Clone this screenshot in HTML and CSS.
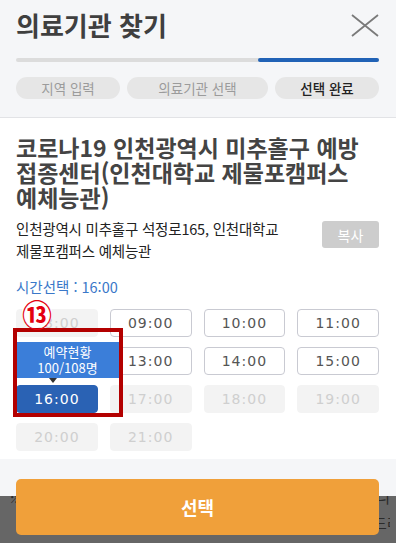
FILE: index.html
```html
<!DOCTYPE html>
<html lang="ko">
<head>
    <meta charset="UTF-8">
    <meta name="viewport" content="width=device-width, initial-scale=1.0">
    <title>의료기관 찾기</title>
    <link rel="stylesheet" href="styles.css">
</head>
<body>
    <div class="screen">
        <div class="modal">
            <div class="modal-head">
                <div class="head-row">
                    <h1 class="head-title">의료기관 찾기</h1>
                    <svg class="close" width="28" height="23" viewBox="0 0 28 23">
                        <path d="M1 1 L27 22 M27 1 L1 22" stroke="#7a7a7a" stroke-width="1.8" fill="none"/>
                    </svg>
                </div>
                <div class="progress"><div class="progress-fill"></div></div>
                <div class="steps">
                    <span class="step">지역 입력</span>
                    <span class="step">의료기관 선택</span>
                    <span class="step active">선택 완료</span>
                </div>
            </div>

            <div class="modal-body">
                <h2 class="place-name">코로나19 인천광역시 미추홀구 예방 접종센터(인천대학교 제물포캠퍼스 예체능관)</h2>
                <div class="address-row">
                    <p class="address">인천광역시 미추홀구 석정로165, 인천대학교 제물포캠퍼스 예체능관</p>
                    <button class="copy-btn">복사</button>
                </div>
                <div class="time-label">시간선택 : 16:00</div>
                <div class="time-grid">
                    <div class="time off">08:00</div>
                    <div class="time">09:00</div>
                    <div class="time">10:00</div>
                    <div class="time">11:00</div>
                    <div class="time covered">12:00</div>
                    <div class="time">13:00</div>
                    <div class="time">14:00</div>
                    <div class="time">15:00</div>
                    <div class="time selected">16:00</div>
                    <div class="time off">17:00</div>
                    <div class="time off">18:00</div>
                    <div class="time off">19:00</div>
                    <div class="time off">20:00</div>
                    <div class="time off">21:00</div>
                </div>

                <div class="tooltip">예약현황<br>100/108명</div>
                <div class="tooltip-arrow"></div>
                <div class="mark-frame"></div>
                <span class="mark-num">⑬</span>
            </div>

            <div class="modal-foot"></div>
        </div>

        <div class="dim">
            <div class="notice">
                <div class="notice-line first">※ 예약 완료 후에는 접종 시간 변경이 어려우니</div>
                <div class="notice-line">예약 전 접종 기관과 시간을 꼭 확인하시기 바랍니다 알려드리니</div>
                <div class="notice-line last">신중하게 선택해주세요</div>
            </div>
        </div>

        <button class="select-btn">선택</button>
    </div>
</body>
</html>
```

FILE: styles.css
```css
body {
    margin: 0;
    background-color: #fff;
    font-family: "Noto Sans CJK KR", "Noto Sans", sans-serif;
}
.screen {
    position: relative;
    width: 396px;
    height: 543px;
    overflow: hidden;
    background-color: #666;
}
.modal {
    background-color: #fff;
}
.modal-head {
    background-color: #f5f6f8;
    padding: 10px 17px 18px 16px;
    border-bottom: 1px solid #e2e3e6;
}
.head-row {
    display: flex;
    justify-content: space-between;
    align-items: flex-start;
}
.head-title {
    margin: 0;
    font-size: 26px;
    line-height: 30px;
    font-weight: bold;
    color: #3f3f3f;
}
.close {
    margin-top: 4px;
}
.progress {
    margin-top: 18px;
    height: 4px;
    border-radius: 2px;
    background-color: #dcdcdc;
    display: flex;
    justify-content: flex-end;
}
.progress-fill {
    width: 121px;
    border-radius: 2px;
    background-color: #2162b6;
}
.steps {
    margin-top: 15px;
    display: grid;
    grid-template-columns: 104px 1fr 104px;
    gap: 7px;
}
.step {
    height: 22px;
    line-height: 22px;
    border-radius: 11px;
    background-color: #e6e6e6;
    text-align: center;
    font-size: 13.5px;
    color: #9b9b9b;
}
.step.active {
    color: #222;
    font-weight: 500;
}
.modal-body {
    position: relative;
    height: 341px;
    padding: 17px 17px 0 16px;
    box-sizing: border-box;
    overflow: hidden;
}
.place-name {
    margin: 0;
    font-size: 23px;
    line-height: 25px;
    font-weight: bold;
    color: #444;
    word-break: keep-all;
}
.address-row {
    margin-top: 8px;
    display: flex;
    align-items: flex-start;
    gap: 14px;
}
.address {
    flex: 1;
    margin: 0;
    font-size: 14.5px;
    line-height: 22px;
    color: #222;
    letter-spacing: -0.2px;
    word-break: keep-all;
}
.copy-btn {
    margin-top: 3px;
    width: 57px;
    height: 27px;
    border: none;
    border-radius: 3px;
    background-color: #cdcdcd;
    color: #fff;
    font-family: inherit;
    font-size: 14px;
}
.time-label {
    margin-top: 15px;
    font-size: 14.5px;
    line-height: 20px;
    color: #3a78c9;
}
.time-grid {
    margin-top: 12px;
    display: grid;
    grid-template-columns: repeat(4, 1fr);
    gap: 10px 12px;
}
.time {
    height: 28px;
    line-height: 26px;
    box-sizing: border-box;
    border: 1px solid #c9cad2;
    border-radius: 4px;
    text-align: center;
    font-family: "DejaVu Sans", sans-serif;
    font-size: 14px;
    color: #555;
    letter-spacing: 1px;
}
.time.off {
    border-color: #f3f3f3;
    background-color: #f3f3f3;
    color: #cfcfcf;
}
.time.selected {
    border-color: #2a62b4;
    background-color: #2a62b4;
    color: #fff;
}
.time.covered {
    visibility: hidden;
}
.tooltip {
    position: absolute;
    left: 16px;
    top: 224px;
    width: 103px;
    height: 36px;
    padding-top: 2px;
    box-sizing: border-box;
    background-color: #3b7ed9;
    color: #fff;
    text-align: center;
    font-size: 13px;
    line-height: 16px;
}
.tooltip-arrow {
    position: absolute;
    left: 49px;
    top: 260px;
    border-left: 4px solid transparent;
    border-right: 4px solid transparent;
    border-top: 5px solid #333;
}
.mark-frame {
    position: absolute;
    left: 13px;
    top: 210px;
    width: 110px;
    height: 89px;
    box-sizing: border-box;
    border: 4px solid #b30000;
}
.mark-num {
    position: absolute;
    left: 22px;
    top: 180px;
    font-size: 30px;
    line-height: 30px;
    font-weight: bold;
    color: #e40010;
    background-color: #fff;
    border-radius: 50%;
}
.modal-foot {
    height: 37px;
    background-color: #f5f6f8;
}
.dim {
    height: 46px;
    overflow: hidden;
}
.notice {
    margin-top: -12px;
    padding: 0 6px 0 22px;
    font-size: 15px;
    line-height: 26px;
    color: #2b2b2b;
}
.notice-line {
    white-space: nowrap;
    overflow: hidden;
    text-align-last: justify;
}
.notice-line.first {
    margin-left: -13px;
}
.notice-line.last {
    text-align-last: left;
}
.select-btn {
    position: absolute;
    left: 16px;
    top: 479px;
    width: 363px;
    height: 56px;
    border: none;
    border-radius: 5px;
    background-color: #f0a03a;
    color: #fff;
    font-family: inherit;
    font-size: 18px;
    font-weight: bold;
}
```
